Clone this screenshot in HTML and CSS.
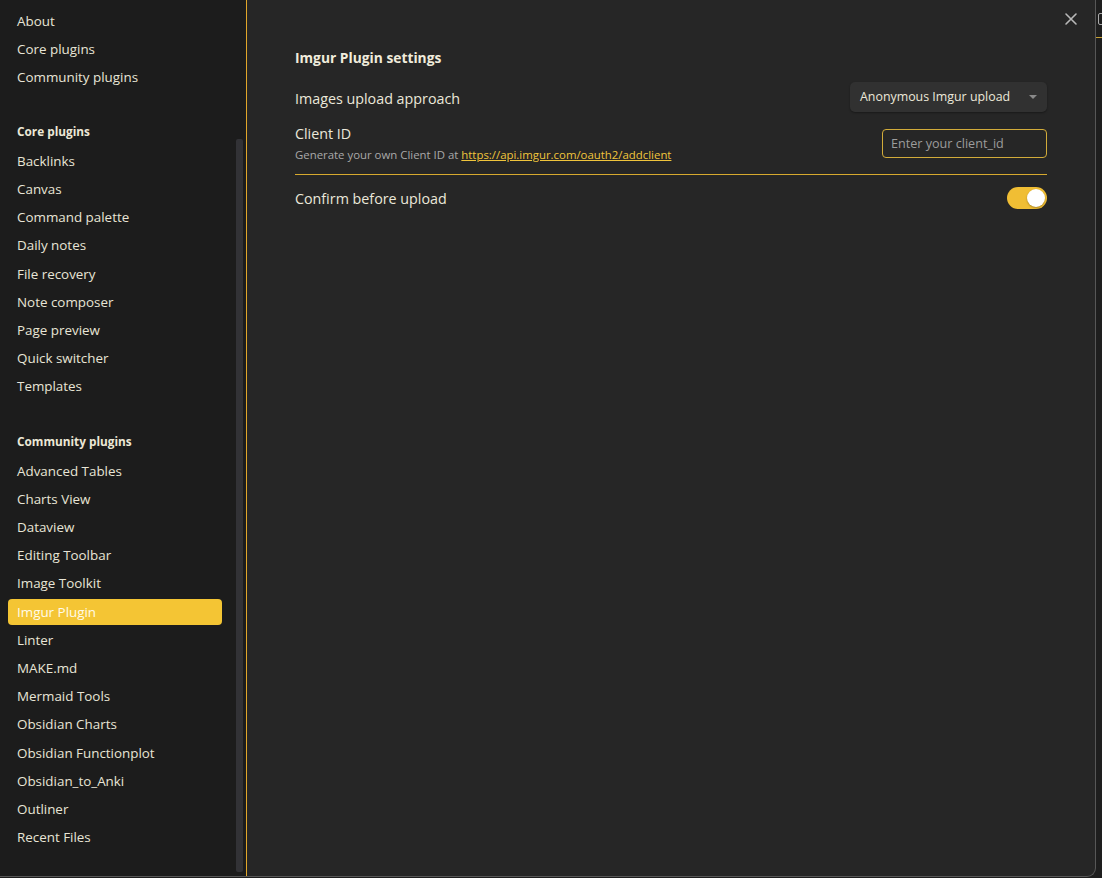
FILE: index.html
```html
<!DOCTYPE html>
<html>
<head>
<meta charset="utf-8">
<link rel="stylesheet" href="styles.css">
</head>
<body>
<div class="screen">
  <div class="modal">
    <aside class="sidebar">
      <nav class="group first">
        <div class="item">About</div>
        <div class="item">Core plugins</div>
        <div class="item">Community plugins</div>
      </nav>
      <nav class="group core">
        <div class="heading">Core plugins</div>
        <div class="item">Backlinks</div>
        <div class="item">Canvas</div>
        <div class="item">Command palette</div>
        <div class="item">Daily notes</div>
        <div class="item">File recovery</div>
        <div class="item">Note composer</div>
        <div class="item">Page preview</div>
        <div class="item">Quick switcher</div>
        <div class="item">Templates</div>
      </nav>
      <nav class="group community">
        <div class="heading">Community plugins</div>
        <div class="item">Advanced Tables</div>
        <div class="item">Charts View</div>
        <div class="item">Dataview</div>
        <div class="item">Editing Toolbar</div>
        <div class="item">Image Toolkit</div>
        <div class="item active">Imgur Plugin</div>
        <div class="item">Linter</div>
        <div class="item">MAKE.md</div>
        <div class="item">Mermaid Tools</div>
        <div class="item">Obsidian Charts</div>
        <div class="item">Obsidian Functionplot</div>
        <div class="item">Obsidian_to_Anki</div>
        <div class="item">Outliner</div>
        <div class="item">Recent Files</div>
      </nav>
      <div class="scrollbar"></div>
    </aside>
    <main class="content">
      <button class="close" aria-label="Close">
        <svg width="14" height="14" viewBox="0 0 14 14"><path d="M2 2 L12 12 M12 2 L2 12" stroke="#b8b8b8" stroke-width="1.6" stroke-linecap="round" fill="none"/></svg>
      </button>
      <h2 class="title">Imgur Plugin settings</h2>
      <div class="setting row1">
        <div class="info"><div class="name">Images upload approach</div></div>
        <div class="control">
          <div class="dropdown">Anonymous Imgur upload<span class="caret"></span></div>
        </div>
      </div>
      <div class="setting row2">
        <div class="info">
          <div class="name">Client ID</div>
          <div class="desc">Generate your own Client ID at <a href="#">https://api.imgur.com/oauth2/addclient</a></div>
        </div>
        <div class="control">
          <div class="input">Enter your client_id</div>
        </div>
      </div>
      <div class="setting row3">
        <div class="info"><div class="name">Confirm before upload</div></div>
        <div class="control">
          <div class="toggle"><span class="knob"></span></div>
        </div>
      </div>
    </main>
  </div>
  <div class="outside">
    <div class="mini-icon"></div>
    <div class="mini-line"></div>
  </div>
</div>
</body>
</html>
```
FILE: styles.css
```css
* { box-sizing: border-box; }
html, body { margin: 0; padding: 0; }
body {
  background: #1e1e1e;
  font-family: "Open Sans", "Noto Sans", sans-serif;
  color: #e6e3d6;
  width: 1102px;
  height: 878px;
  overflow: hidden;
}
.screen {
  display: flex;
  width: 1102px;
  height: 878px;
}
.modal {
  display: flex;
  width: 1096px;
  height: 877px;
  border-right: 1px solid #575757;
  border-bottom: 1px solid #575757;
  border-bottom-right-radius: 9px;
  overflow: hidden;
  background: #262626;
}
.sidebar {
  position: relative;
  width: 247px;
  flex: none;
  background: #1c1c1c;
  border-right: 1px solid #e2a72a;
  padding: 8px 24px 0 8px;
}
.group.first { margin-top: 0; }
.group.core { margin-top: 27px; }
.group.community { margin-top: 28px; }
.heading {
  height: 29px;
  line-height: 29px;
  margin-bottom: 1.4px;
  padding-left: 9px;
  font-size: 11.8px;
  font-weight: 700;
  color: #ece8d6;
}
.item {
  height: 26px;
  margin-bottom: 2.2px;
  line-height: 26px;
  padding-left: 9px;
  font-size: 13.4px;
  border-radius: 4px;
  color: #e8e5d6;
  white-space: nowrap;
}
.item.active {
  background: #f4c534;
  color: #fffbea;
}
.scrollbar {
  position: absolute;
  left: 236px;
  top: 139px;
  width: 7px;
  height: 733px;
  background: #323236;
  border-radius: 2px;
}
.content {
  position: relative;
  flex: 1;
  padding: 48px 48px 0 48px;
}
.close {
  position: absolute;
  top: 12px;
  right: 17px;
  width: 14px;
  height: 14px;
  padding: 0;
  border: 0;
  background: none;
  display: flex;
}
.title {
  margin: 0;
  height: 20px;
  line-height: 20px;
  font-size: 13.8px;
  font-weight: 700;
  color: #f0ecdc;
}
.setting {
  display: flex;
  align-items: center;
  justify-content: space-between;
}
.name {
  font-size: 14.3px;
  line-height: 20px;
  color: #ebe8da;
}
.row1 .name, .row3 .name { padding-top: 3px; }
.row2 .name { padding-top: 1px; }
.desc {
  font-size: 11.4px;
  line-height: 16px;
  margin-top: 3px;
  color: #a9a9a9;
}
.desc a {
  color: #f0c53c;
  text-decoration: underline;
}
.row1 { margin-top: 14px; height: 30px; }
.row2 { padding: 11px 0; }
.row3 {
  border-top: 1px solid #d6a92e;
  padding: 11px 0;
}
.dropdown {
  position: relative;
  width: 197px;
  height: 30px;
  line-height: 30px;
  padding-left: 10px;
  font-size: 12.4px;
  color: #ece8da;
  background: #313131;
  border-radius: 5px;
  box-shadow: 0 1px 2px rgba(0,0,0,0.35);
}
.caret {
  position: absolute;
  right: 10px;
  top: 13px;
  width: 0;
  height: 0;
  border-left: 4px solid transparent;
  border-right: 4px solid transparent;
  border-top: 4px solid #8a8a8a;
}
.input {
  width: 165px;
  height: 29px;
  line-height: 27px;
  padding-left: 8px;
  font-size: 12.6px;
  color: #9c9c9c;
  border: 1px solid #d2ac3a;
  border-radius: 4px;
  background: #262626;
}
.toggle {
  position: relative;
  width: 40px;
  height: 22px;
  border-radius: 11px;
  background: #f0be34;
}
.knob {
  position: absolute;
  right: 2px;
  top: 2px;
  width: 18px;
  height: 18px;
  border-radius: 50%;
  background: #ffffff;
  box-shadow: 0 1px 2px rgba(0,0,0,0.3);
}
.outside {
  position: relative;
  flex: 1;
}
.mini-icon {
  position: absolute;
  left: 2px;
  top: 13px;
  width: 10px;
  height: 12px;
  border: 1px solid #aaa;
  border-radius: 2px;
}
.mini-line {
  position: absolute;
  left: 0;
  top: 37px;
  width: 6px;
  height: 1px;
  background: #c9a233;
}
```
